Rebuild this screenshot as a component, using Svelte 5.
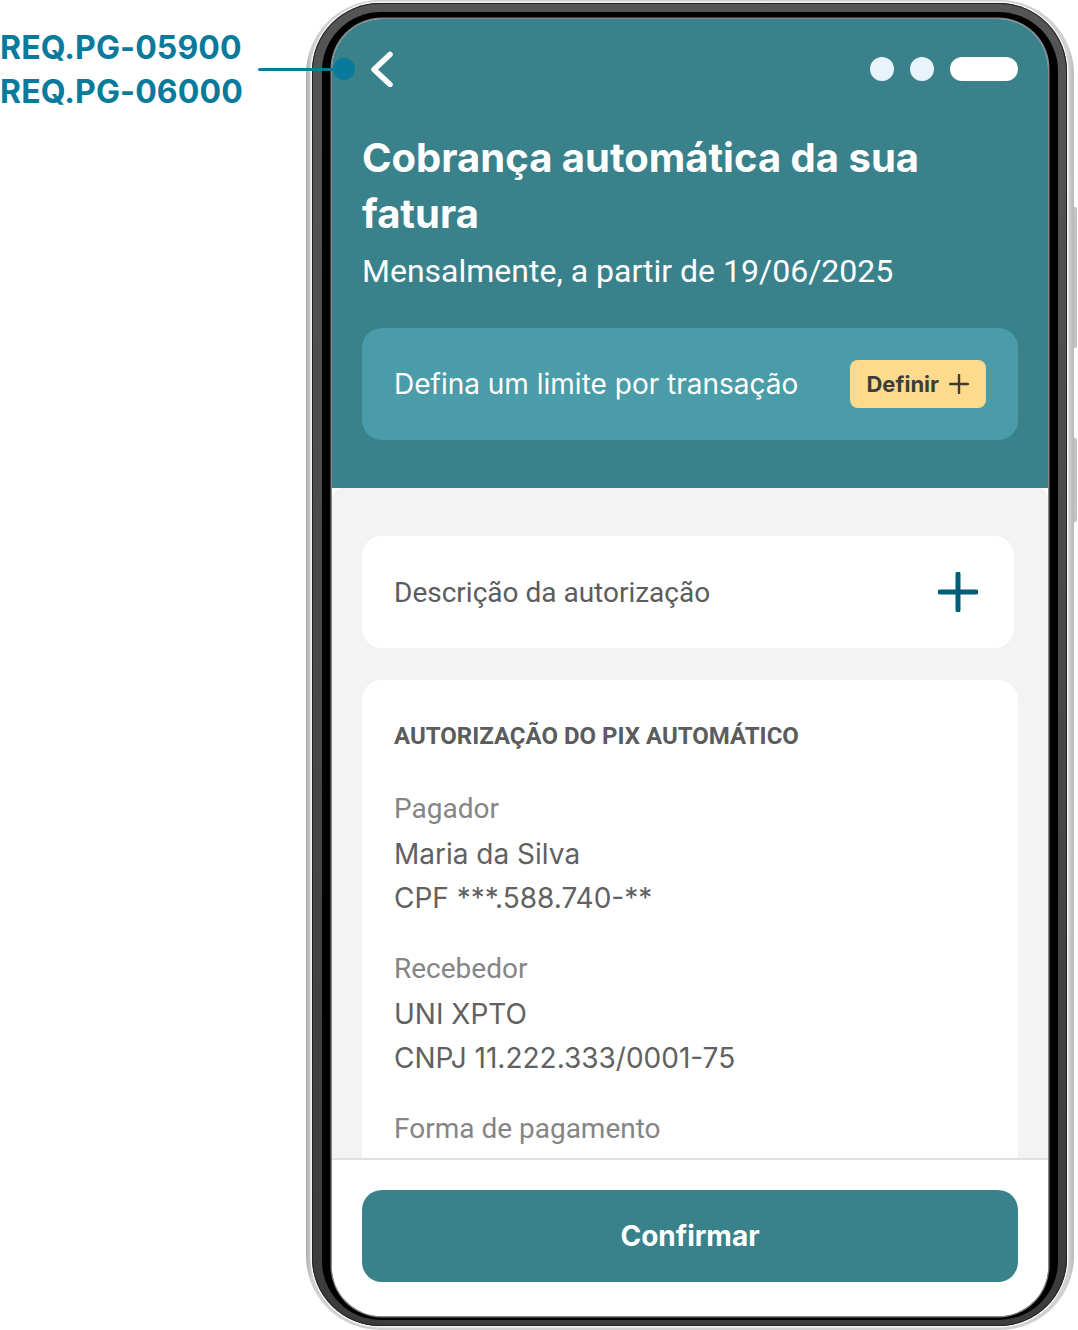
<script>
  const details = [
    { label: "Pagador", lines: ["Maria da Silva", "CPF ***.588.740-**"] },
    { label: "Recebedor", lines: ["UNI XPTO", "CNPJ 11.222.333/0001-75"] },
    { label: "Forma de pagamento", lines: [] }
  ];
</script>

<div class="page">
  <div class="req">
    <p>REQ.PG-05900</p>
    <p>REQ.PG-06000</p>
  </div>
  <div class="pointer"><span class="dot"></span></div>

  <div class="phone">
    <span class="key key-a"></span>
    <span class="key key-b"></span>
    <div class="bezel">
      <div class="rim">
        <div class="screen">
          <header class="top">
            <div class="nav">
              <svg class="back" width="24" height="36" viewBox="0 0 24 36" fill="none">
                <path d="M20 3.5 L4 18.5 L20 33.5" stroke="#fff" stroke-width="5.5" stroke-linecap="round" stroke-linejoin="round" />
              </svg>
              <div class="status">
                <span class="circle"></span>
                <span class="circle"></span>
                <span class="pill"></span>
              </div>
            </div>
            <h1>Cobrança automática da sua fatura</h1>
            <p class="sub">Mensalmente, a partir de 19/06/2025</p>
            <div class="limit">
              <span>Defina um limite por transação</span>
              <button class="define">
                Definir
                <svg width="20" height="20" viewBox="0 0 20 20" fill="none">
                  <path d="M10 1 V19 M1 10 H19" stroke="#3d3d3d" stroke-width="2.4" stroke-linecap="round" />
                </svg>
              </button>
            </div>
          </header>

          <main class="body">
            <div class="card desc">
              <span>Descrição da autorização</span>
              <svg width="40" height="40" viewBox="0 0 40 40" fill="none">
                <path d="M20 2 V38 M2 20 H38" stroke="#005f78" stroke-width="5" stroke-linecap="round" />
              </svg>
            </div>
            <div class="card info">
              <h2>AUTORIZAÇÃO DO PIX AUTOMÁTICO</h2>
              {#each details as item}
                <div class="item">
                  <p class="label">{item.label}</p>
                  {#each item.lines as line}
                    <p class="value">{line}</p>
                  {/each}
                </div>
              {/each}
            </div>
          </main>

          <footer class="bottom">
            <button class="confirm">Confirmar</button>
          </footer>
        </div>
      </div>
    </div>
  </div>
</div>

<style>
  :global(body) {
    background: #fff;
  }
  p, h1, h2 {
    margin: 0;
  }
  button {
    border: none;
    cursor: pointer;
  }
  .page {
    position: relative;
    width: 1078px;
    height: 1330px;
    overflow: hidden;
    font-family: Inter, sans-serif;
  }
  .req {
    position: absolute;
    left: 0;
    top: 26px;
    font-weight: 700;
    font-size: 32px;
    line-height: 44px;
    letter-spacing: 0.12px;
    color: #087a9c;
  }
  .pointer {
    position: absolute;
    z-index: 2;
    left: 258px;
    top: 67.5px;
    width: 86px;
    height: 3px;
    border-radius: 2px;
    background: #087a9c;
  }
  .dot {
    position: absolute;
    right: -11px;
    top: -9.5px;
    width: 22px;
    height: 22px;
    border-radius: 50%;
    background: #087a9c;
  }
  .phone {
    position: relative;
    box-sizing: border-box;
    margin-left: 306px;
    width: 768px;
    height: 1330px;
    padding: 3px 7px 4px 6px;
    border-radius: 74px;
    background: linear-gradient(90deg, #acacac, #d0d0d0 0.7%, #d0d0d0 99.3%, #b8b8b8);
  }
  .key {
    position: absolute;
    right: -3px;
    width: 3px;
    border-radius: 0 2px 2px 0;
    background: #c4c4c4;
  }
  .key-a {
    top: 207px;
    height: 141px;
  }
  .key-b {
    top: 438px;
    height: 84px;
  }
  .bezel {
    box-sizing: border-box;
    height: 100%;
    padding: 9px 9px 6px 10px;
    border-radius: 68px;
    background: linear-gradient(180deg, #555 0%, #3c3c3c 100%);
    box-shadow: 0 0 0 1.5px #f6f6f6, inset 0 0 0 1px #222;
  }
  .rim {
    box-sizing: border-box;
    height: 100%;
    padding: 7px 10px 4px 10px;
    border-radius: 59px;
    background: #000;
  }
  .screen {
    display: flex;
    flex-direction: column;
    height: 100%;
    overflow: hidden;
    border-radius: 50px;
    box-shadow: 0 0 0 1.5px #858585;
    background: #fff;
  }
  .top {
    flex: none;
    box-sizing: border-box;
    height: 469px;
    padding: 0 30px;
    background: #39828b;
    color: #fff;
  }
  .nav {
    display: flex;
    align-items: center;
    justify-content: space-between;
    height: 100px;
  }
  .back {
    margin-left: 8px;
  }
  .status {
    display: flex;
    gap: 16px;
  }
  .circle {
    width: 24px;
    height: 24px;
    border-radius: 50%;
    background: #e8f4fa;
  }
  .pill {
    width: 68px;
    height: 24px;
    border-radius: 12px;
    background: #fff;
  }
  h1 {
    width: 620px;
    margin-top: 11px;
    font-weight: 700;
    font-size: 40px;
    line-height: 56px;
  }
  .sub {
    margin-top: 7px;
    font-family: Roboto, sans-serif;
    font-size: 32px;
    line-height: 44px;
  }
  .limit {
    display: flex;
    align-items: center;
    justify-content: space-between;
    height: 112px;
    margin-top: 35px;
    padding: 0 32px;
    border-radius: 20px;
    background: #4a9ca8;
    font-size: 28px;
  }
  .define {
    display: flex;
    align-items: center;
    gap: 10px;
    height: 48px;
    padding: 0 17px 0 16px;
    border-radius: 8px;
    background: #fedb8c;
    color: #3d3d3d;
    font-family: Inter, sans-serif;
    font-weight: 700;
    font-size: 22px;
  }
  .body {
    flex: 1;
    min-height: 0;
    overflow: hidden;
    padding: 48px 30px 0;
    border-radius: 10px 10px 0 0;
    background: #f3f3f3;
  }
  .card {
    border-radius: 20px;
    background: #fff;
  }
  .desc {
    display: flex;
    align-items: center;
    justify-content: space-between;
    box-sizing: border-box;
    width: 652px;
    height: 112px;
    padding: 0 36px 0 32px;
    font-family: Roboto, sans-serif;
    font-size: 28px;
    color: #5c5c5c;
  }
  .info {
    margin-top: 32px;
    padding: 40px 32px 0;
    height: 600px;
    font-size: 28px;
    color: #616161;
  }
  h2 {
    margin-bottom: 35px;
    font-family: Roboto, sans-serif;
    font-weight: 700;
    font-size: 24px;
    line-height: 32px;
    color: #5c5c5c;
  }
  .item {
    margin-bottom: 27px;
  }
  .label {
    margin-bottom: 1px;
    font-family: Roboto, sans-serif;
    line-height: 44px;
    color: #858585;
  }
  .value {
    line-height: 44px;
  }
  .bottom {
    flex: none;
    box-sizing: border-box;
    height: 158px;
    padding: 30px 30px 0;
    border-top: 2px solid #e0e0e0;
    background: #fff;
  }
  .confirm {
    width: 100%;
    height: 92px;
    border-radius: 20px;
    background: #39828b;
    color: #fff;
    font-family: Inter, sans-serif;
    font-weight: 700;
    font-size: 28px;
  }
</style>
